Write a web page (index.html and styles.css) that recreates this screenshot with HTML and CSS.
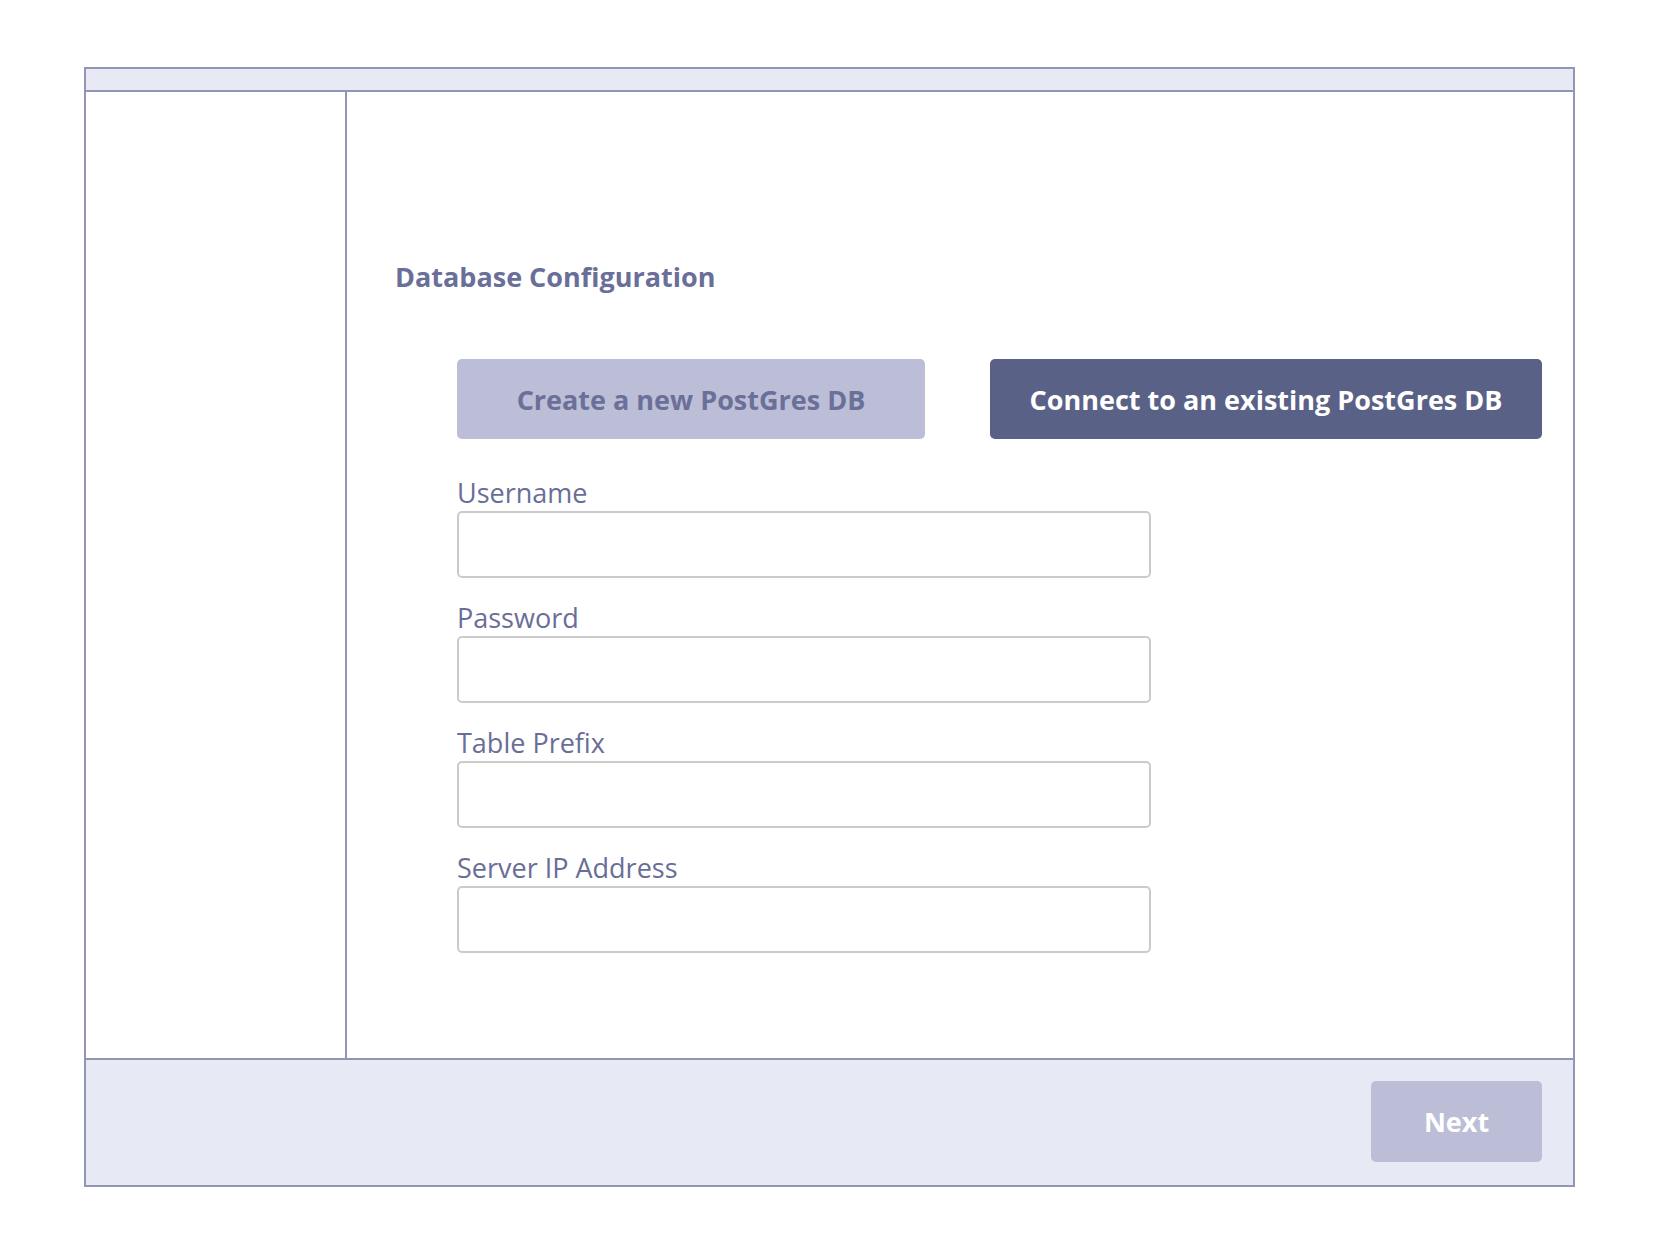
FILE: index.html
```html
<!DOCTYPE html>
<html lang="en">
<head>
<meta charset="utf-8">
<title>Database Configuration</title>
<link rel="stylesheet" href="styles.css">
</head>
<body>
<div class="frame">
  <div class="topbar"></div>
  <div class="body">
    <aside class="sidebar"></aside>
    <main class="main">
      <h1 class="title">Database Configuration</h1>
      <div class="choices">
        <button class="btn btn-light btn-create">Create a new PostGres DB</button>
        <button class="btn btn-dark btn-connect">Connect to an existing PostGres DB</button>
      </div>
      <form class="form">
        <div class="field">
          <label class="label">Username</label>
          <input class="input" type="text">
        </div>
        <div class="field">
          <label class="label">Password</label>
          <input class="input" type="password">
        </div>
        <div class="field">
          <label class="label">Table Prefix</label>
          <input class="input" type="text">
        </div>
        <div class="field">
          <label class="label">Server IP Address</label>
          <input class="input" type="text">
        </div>
      </form>
    </main>
  </div>
  <div class="footer">
    <button class="btn btn-light btn-next">Next</button>
  </div>
</div>
</body>
</html>
```
FILE: styles.css
```css
* { box-sizing: border-box; }
html, body { margin: 0; padding: 0; background: #ffffff; }
body {
  font-family: "Open Sans", "Noto Sans", sans-serif;
  padding: 67px 0 0 84px;
}
.frame {
  width: 1491px;
  border: 2px solid #9395b4;
  display: flex;
  flex-direction: column;
}
.topbar {
  height: 23px;
  background: #e7e9f5;
  border-bottom: 2px solid #9395b4;
}
.body {
  display: flex;
  height: 966px;
}
.sidebar {
  width: 261px;
  border-right: 2px solid #9395b4;
  flex: none;
}
.main {
  flex: 1;
  padding: 166px 31px 0 48px;
}
.title {
  margin: 0;
  font-size: 27px;
  line-height: 38px;
  font-weight: 700;
  color: #6a6f9a;
}
.choices {
  display: flex;
  gap: 65px;
  margin-top: 63px;
  padding-left: 62px;
}
.btn {
  border: none;
  border-radius: 5px;
  font-family: "Open Sans", "Noto Sans", sans-serif;
  font-size: 27px;
  font-weight: 700;
  height: 80px;
  padding: 0;
  cursor: pointer;
}
.btn-light { background: #bbbed6; color: #6b7099; }
.btn-dark { background: #5a6186; color: #ffffff; }
.btn-create { width: 468px; }
.btn-connect { width: 552px; }
.form {
  margin-top: 36px;
  padding-left: 62px;
  display: flex;
  flex-direction: column;
  gap: 22px;
}
.field { display: flex; flex-direction: column; }
.label {
  font-size: 27px;
  line-height: 36px;
  color: #696e97;
}
.input {
  width: 694px;
  height: 67px;
  border: 2px solid #cbcbcb;
  border-radius: 5px;
  background: #fff;
  font-size: 24px;
  padding: 0 14px;
}
.footer {
  height: 127px;
  background: #e7e9f5;
  border-top: 2px solid #9395b4;
  display: flex;
  justify-content: flex-end;
  align-items: flex-start;
  padding: 21px 31px 0 0;
}
.btn-next {
  width: 171px;
  height: 81px;
  color: #ffffff;
}
```
